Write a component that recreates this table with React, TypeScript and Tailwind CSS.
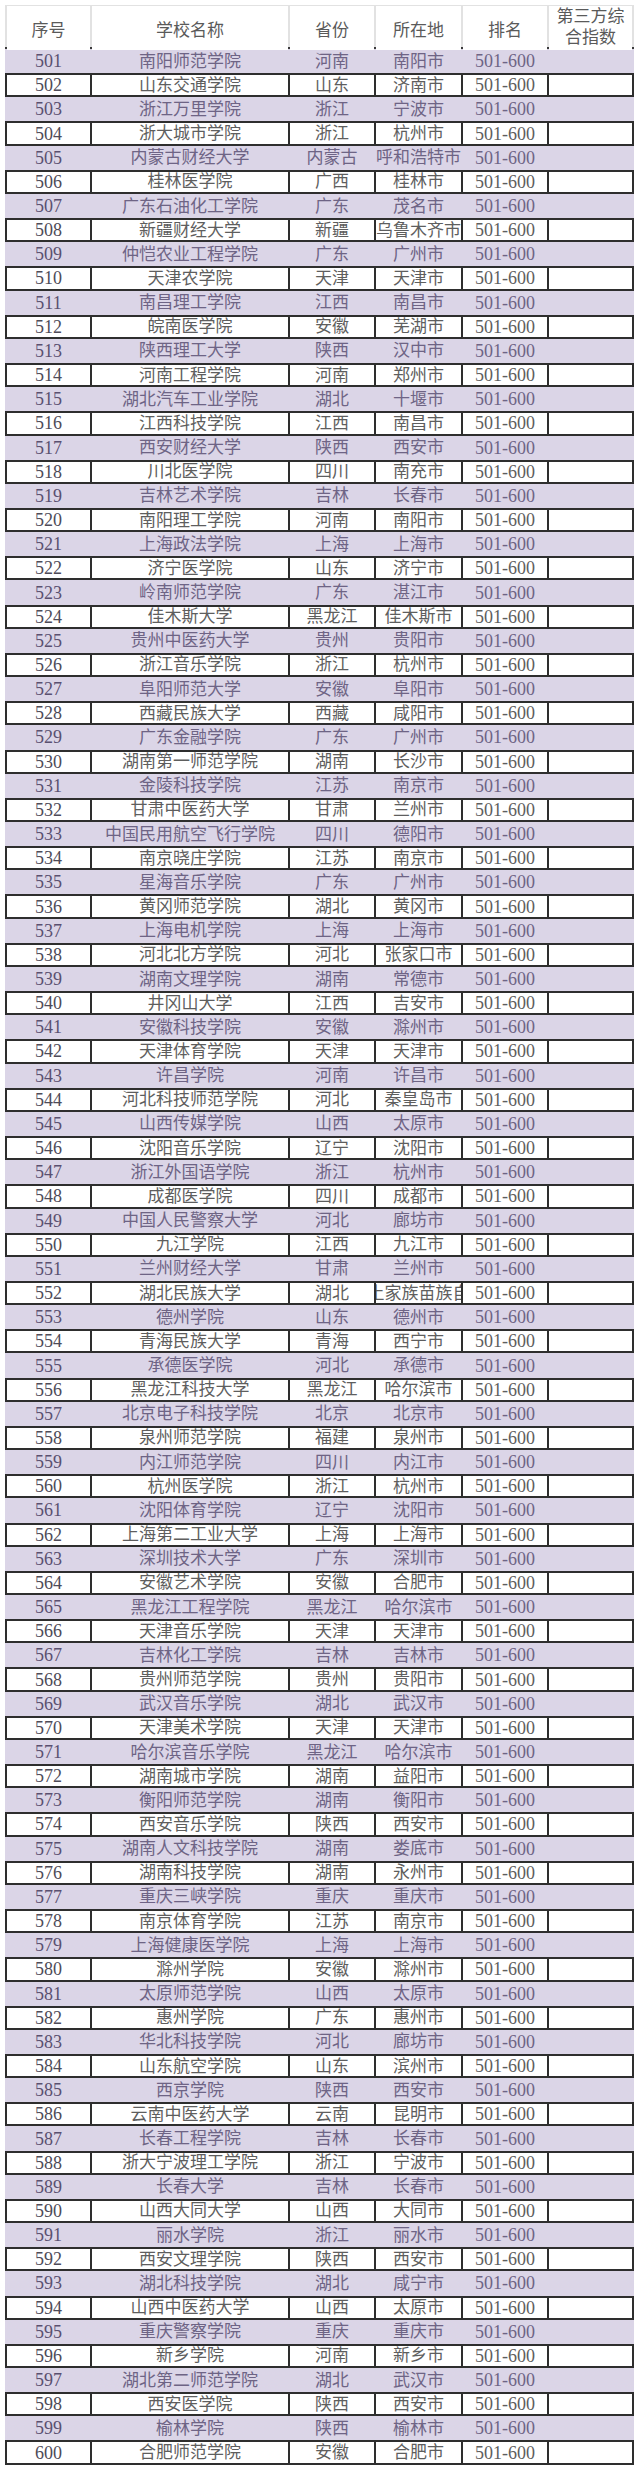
import React from "react";

const rows: [string, string, string][] = [
  ["南阳师范学院", "河南", "南阳市"],
  ["山东交通学院", "山东", "济南市"],
  ["浙江万里学院", "浙江", "宁波市"],
  ["浙大城市学院", "浙江", "杭州市"],
  ["内蒙古财经大学", "内蒙古", "呼和浩特市"],
  ["桂林医学院", "广西", "桂林市"],
  ["广东石油化工学院", "广东", "茂名市"],
  ["新疆财经大学", "新疆", "乌鲁木齐市"],
  ["仲恺农业工程学院", "广东", "广州市"],
  ["天津农学院", "天津", "天津市"],
  ["南昌理工学院", "江西", "南昌市"],
  ["皖南医学院", "安徽", "芜湖市"],
  ["陕西理工大学", "陕西", "汉中市"],
  ["河南工程学院", "河南", "郑州市"],
  ["湖北汽车工业学院", "湖北", "十堰市"],
  ["江西科技学院", "江西", "南昌市"],
  ["西安财经大学", "陕西", "西安市"],
  ["川北医学院", "四川", "南充市"],
  ["吉林艺术学院", "吉林", "长春市"],
  ["南阳理工学院", "河南", "南阳市"],
  ["上海政法学院", "上海", "上海市"],
  ["济宁医学院", "山东", "济宁市"],
  ["岭南师范学院", "广东", "湛江市"],
  ["佳木斯大学", "黑龙江", "佳木斯市"],
  ["贵州中医药大学", "贵州", "贵阳市"],
  ["浙江音乐学院", "浙江", "杭州市"],
  ["阜阳师范大学", "安徽", "阜阳市"],
  ["西藏民族大学", "西藏", "咸阳市"],
  ["广东金融学院", "广东", "广州市"],
  ["湖南第一师范学院", "湖南", "长沙市"],
  ["金陵科技学院", "江苏", "南京市"],
  ["甘肃中医药大学", "甘肃", "兰州市"],
  ["中国民用航空飞行学院", "四川", "德阳市"],
  ["南京晓庄学院", "江苏", "南京市"],
  ["星海音乐学院", "广东", "广州市"],
  ["黄冈师范学院", "湖北", "黄冈市"],
  ["上海电机学院", "上海", "上海市"],
  ["河北北方学院", "河北", "张家口市"],
  ["湖南文理学院", "湖南", "常德市"],
  ["井冈山大学", "江西", "吉安市"],
  ["安徽科技学院", "安徽", "滁州市"],
  ["天津体育学院", "天津", "天津市"],
  ["许昌学院", "河南", "许昌市"],
  ["河北科技师范学院", "河北", "秦皇岛市"],
  ["山西传媒学院", "山西", "太原市"],
  ["沈阳音乐学院", "辽宁", "沈阳市"],
  ["浙江外国语学院", "浙江", "杭州市"],
  ["成都医学院", "四川", "成都市"],
  ["中国人民警察大学", "河北", "廊坊市"],
  ["九江学院", "江西", "九江市"],
  ["兰州财经大学", "甘肃", "兰州市"],
  ["湖北民族大学", "湖北", "恩施土家族苗族自治州"],
  ["德州学院", "山东", "德州市"],
  ["青海民族大学", "青海", "西宁市"],
  ["承德医学院", "河北", "承德市"],
  ["黑龙江科技大学", "黑龙江", "哈尔滨市"],
  ["北京电子科技学院", "北京", "北京市"],
  ["泉州师范学院", "福建", "泉州市"],
  ["内江师范学院", "四川", "内江市"],
  ["杭州医学院", "浙江", "杭州市"],
  ["沈阳体育学院", "辽宁", "沈阳市"],
  ["上海第二工业大学", "上海", "上海市"],
  ["深圳技术大学", "广东", "深圳市"],
  ["安徽艺术学院", "安徽", "合肥市"],
  ["黑龙江工程学院", "黑龙江", "哈尔滨市"],
  ["天津音乐学院", "天津", "天津市"],
  ["吉林化工学院", "吉林", "吉林市"],
  ["贵州师范学院", "贵州", "贵阳市"],
  ["武汉音乐学院", "湖北", "武汉市"],
  ["天津美术学院", "天津", "天津市"],
  ["哈尔滨音乐学院", "黑龙江", "哈尔滨市"],
  ["湖南城市学院", "湖南", "益阳市"],
  ["衡阳师范学院", "湖南", "衡阳市"],
  ["西安音乐学院", "陕西", "西安市"],
  ["湖南人文科技学院", "湖南", "娄底市"],
  ["湖南科技学院", "湖南", "永州市"],
  ["重庆三峡学院", "重庆", "重庆市"],
  ["南京体育学院", "江苏", "南京市"],
  ["上海健康医学院", "上海", "上海市"],
  ["滁州学院", "安徽", "滁州市"],
  ["太原师范学院", "山西", "太原市"],
  ["惠州学院", "广东", "惠州市"],
  ["华北科技学院", "河北", "廊坊市"],
  ["山东航空学院", "山东", "滨州市"],
  ["西京学院", "陕西", "西安市"],
  ["云南中医药大学", "云南", "昆明市"],
  ["长春工程学院", "吉林", "长春市"],
  ["浙大宁波理工学院", "浙江", "宁波市"],
  ["长春大学", "吉林", "长春市"],
  ["山西大同大学", "山西", "大同市"],
  ["丽水学院", "浙江", "丽水市"],
  ["西安文理学院", "陕西", "西安市"],
  ["湖北科技学院", "湖北", "咸宁市"],
  ["山西中医药大学", "山西", "太原市"],
  ["重庆警察学院", "重庆", "重庆市"],
  ["新乡学院", "河南", "新乡市"],
  ["湖北第二师范学院", "湖北", "武汉市"],
  ["西安医学院", "陕西", "西安市"],
  ["榆林学院", "陕西", "榆林市"],
  ["合肥师范学院", "安徽", "合肥市"],
];

const font = { fontFamily: "'Liberation Serif', 'Noto Sans CJK SC', serif" };
const grid =
  "grid grid-cols-[83px_196px_84px_85px_84px_83px] gap-x-[2px] px-[2px]";
const cell =
  "flex items-center justify-center overflow-hidden whitespace-nowrap leading-none";

export default function App() {
  return (
    <div className="w-[640px] h-[2470px] bg-white pt-[5px] pl-[5px]" style={font}>
      <div className="w-[629px]">
        <div
          className={`${grid} h-[44px] bg-[#e2e2e2] pt-[1px] border-b-2 border-[#3a3a3a] text-[17px] text-[#5a5a5a]`}
        >
          <div className={`${cell} bg-white pt-[4px]`}>序号</div>
          <div className={`${cell} bg-white pt-[4px]`}>学校名称</div>
          <div className={`${cell} bg-white pt-[4px]`}>省份</div>
          <div className={`${cell} bg-white pt-[4px]`}>所在地</div>
          <div className={`${cell} bg-white pt-[4px]`}>排名</div>
          <div className="flex flex-col items-center justify-center bg-white leading-[21px] pb-[2px]">
            <span>第三方综</span>
            <span>合指数</span>
          </div>
        </div>
        {rows.map((r, i) => {
          const n = 501 + i;
          const odd = i % 2 === 0;
          const rowCls = odd
            ? "bg-[#dbd5e7] text-[#6e6485]"
            : "bg-[#2e2e2e] py-[2px] text-[#5e5e5e]";
          const cBg = odd ? "" : "bg-white";
          return (
            <div key={n} className={`${grid} h-[24.16px] ${rowCls}`}>
              <div className={`${cell} ${cBg} text-[18px] ${odd ? "text-[#5a5070]" : "text-[#4e4b58]"}`}>
                {n}
              </div>
              <div className={`${cell} ${cBg} text-[17px]`}>{r[0]}</div>
              <div className={`${cell} ${cBg} text-[17px]`}>{r[1]}</div>
              <div className={`${cell} ${cBg} text-[17px]`}>{r[2]}</div>
              <div className={`${cell} ${cBg} text-[18px]`}>501-600</div>
              <div className={`${cell} ${cBg}`}></div>
            </div>
          );
        })}
      </div>
    </div>
  );
}
